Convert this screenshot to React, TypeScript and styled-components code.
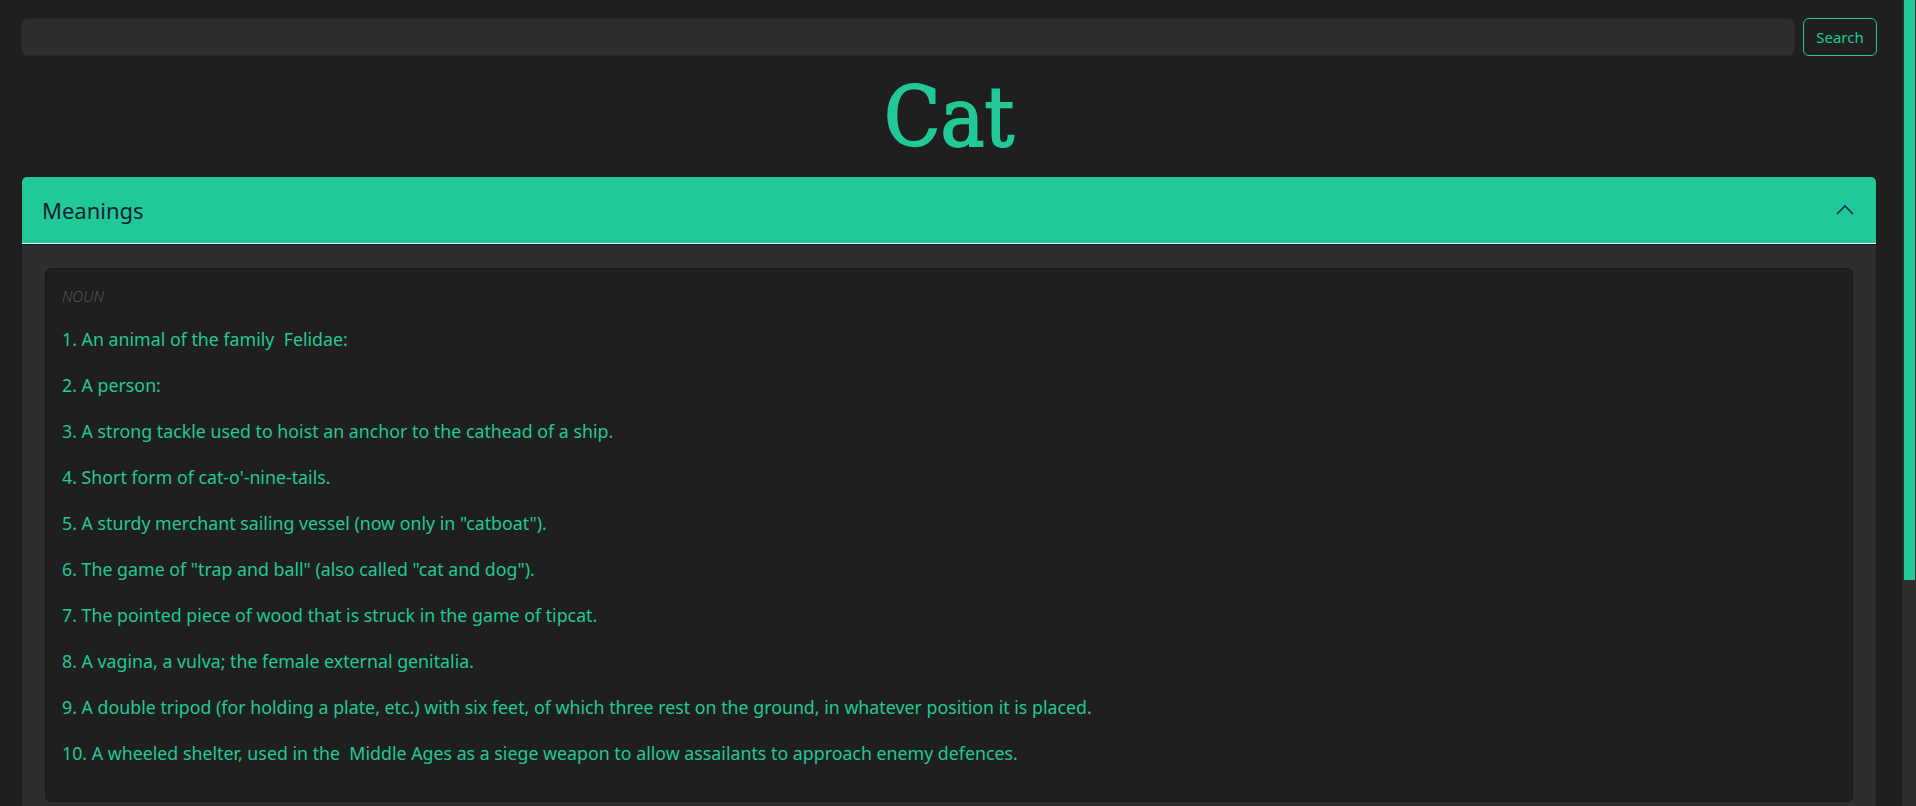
import React from "react";
import styled, { createGlobalStyle } from "styled-components";

const GREEN = "#20c997";

const GlobalStyle = createGlobalStyle`
  html, body, #root {
    margin: 0;
    padding: 0;
    height: 100%;
    overflow: hidden;
    background: #1f1f1f;
    font-family: "Noto Sans", Lato, sans-serif;
  }
  * { box-sizing: border-box; }
`;

const Shell = styled.div`
  display: flex;
  height: 100vh;
  background: #1f1f1f;
`;

const Main = styled.main`
  flex: 1;
  min-width: 0;
  overflow-y: auto;
  scrollbar-width: none;
  &::-webkit-scrollbar { display: none; }
`;

const ScrollTrack = styled.div`
  flex: 0 0 15px;
  display: flex;
  flex-direction: column;
  background: #2e2e30;
  border-left: 1px solid #1a1a1a;
  padding: 0 1px 0 2px;
`;

const ScrollThumb = styled.div`
  background: ${GREEN};
`;

const Page = styled.div`
  padding: 18px 24px 12px 21px;
`;

const SearchBar = styled.form`
  display: flex;
  gap: 8px;
  height: 38px;
`;

const SearchInput = styled.input`
  flex: 1;
  height: 38px;
  background: #2e2e30;
  border: 1px solid #262628;
  border-radius: 6px;
  outline: none;
  color: ${GREEN};
  font-family: inherit;
  font-size: 16px;
  padding: 0 12px;
`;

const SearchButton = styled.button`
  width: 74px;
  height: 38px;
  background: transparent;
  border: 1px solid ${GREEN};
  border-radius: 6px;
  color: ${GREEN};
  font-family: "Noto Sans", Lato, sans-serif;
  font-size: 15px;
  padding: 0;
  cursor: pointer;
`;

const Title = styled.h1`
  margin: 0;
  text-align: center;
  color: ${GREEN};
  font-family: "DejaVu Serif Condensed", "DejaVu Serif", serif;
  font-stretch: condensed;
  font-weight: 400;
  font-size: 82px;
  line-height: 124px;
  height: 120px;
  -webkit-text-stroke: 1.8px ${GREEN};
`;

const Accordion = styled.section`
  background: #2e2e30;
  border: 1px solid #1a1a1a;
  border-radius: 6px;
  overflow: hidden;
`;

const AccordionHeader = styled.button`
  display: flex;
  align-items: center;
  justify-content: space-between;
  width: 100%;
  height: 67px;
  padding: 0 21px 0 20px;
  background: ${GREEN};
  border: none;
  border-bottom: 1px solid #eafff8;
  color: #0f2233;
  font-family: "Noto Sans", Lato, sans-serif;
  font-size: 22px;
  font-weight: 400;
  text-align: left;
  cursor: pointer;
`;

const AccordionBody = styled.div`
  display: grid;
  gap: 24px;
  padding: 23px 23px 24px 23px;
  border-top: 1px solid #161616;
`;

const DefinitionCard = styled.div`
  background: #1f1f1f;
  border: 1px solid #19191a;
  border-radius: 6px;
  padding: 19px 16px 15px;
`;

const PartOfSpeech = styled.div`
  margin: 0 0 22px;
  color: #555555;
  font-style: italic;
  font-size: 15px;
  font-weight: 300;
  line-height: 16px;
  text-transform: uppercase;
`;

const Definition = styled.p`
  margin: 0 0 19px;
  color: ${GREEN};
  font-size: 17.8px;
  line-height: 27px;
`;

const Chevron = () => (
  <svg width="20" height="20" viewBox="0 0 20 20" fill="none" aria-hidden="true">
    <path d="M2 14 L10 6 L18 14" stroke="#142a5c" strokeWidth="1.6" fill="none" />
  </svg>
);

const nouns = [
  "An animal of the family\u00a0 Felidae:",
  "A person:",
  "A strong tackle used to hoist an anchor to the cathead of a ship.",
  "Short form of cat-o'-nine-tails.",
  "A sturdy merchant sailing vessel (now only in \"catboat\").",
  "The game of \"trap and ball\" (also called \"cat and dog\").",
  "The pointed piece of wood that is struck in the game of tipcat.",
  "A vagina, a vulva; the female external genitalia.",
  "A double tripod (for holding a plate, etc.) with six feet, of which three rest on the ground, in whatever position it is placed.",
  "A wheeled shelter, used in the\u00a0 Middle Ages as a siege weapon to allow assailants to approach enemy defences.",
];

const verbs = [
  "To hoist (the anchor) by its ring so that it hangs at the cathead.",
  "To flog with a cat-o'-nine-tails.",
  "To vomit something.",
  "To go wandering at night.",
];

const sections = [
  { pos: "noun", items: nouns },
  { pos: "verb", items: verbs },
];

export default function App() {
  return (
    <>
      <GlobalStyle />
      <Shell>
        <Main>
          <Page>
            <SearchBar onSubmit={(e) => e.preventDefault()}>
              <SearchInput type="text" aria-label="Search word" />
              <SearchButton type="submit">Search</SearchButton>
            </SearchBar>
            <Title>Cat</Title>
            <Accordion>
              <AccordionHeader type="button">
                <span>Meanings</span>
                <Chevron />
              </AccordionHeader>
              <AccordionBody>
                {sections.map((s) => (
                  <DefinitionCard key={s.pos}>
                    <PartOfSpeech>{s.pos}</PartOfSpeech>
                    {s.items.map((d, i) => (
                      <Definition key={i}>
                        {i + 1}. {d}
                      </Definition>
                    ))}
                  </DefinitionCard>
                ))}
              </AccordionBody>
            </Accordion>
          </Page>
        </Main>
        <ScrollTrack aria-hidden="true">
          <ScrollThumb style={{ height: "72%" }} />
        </ScrollTrack>
      </Shell>
    </>
  );
}
